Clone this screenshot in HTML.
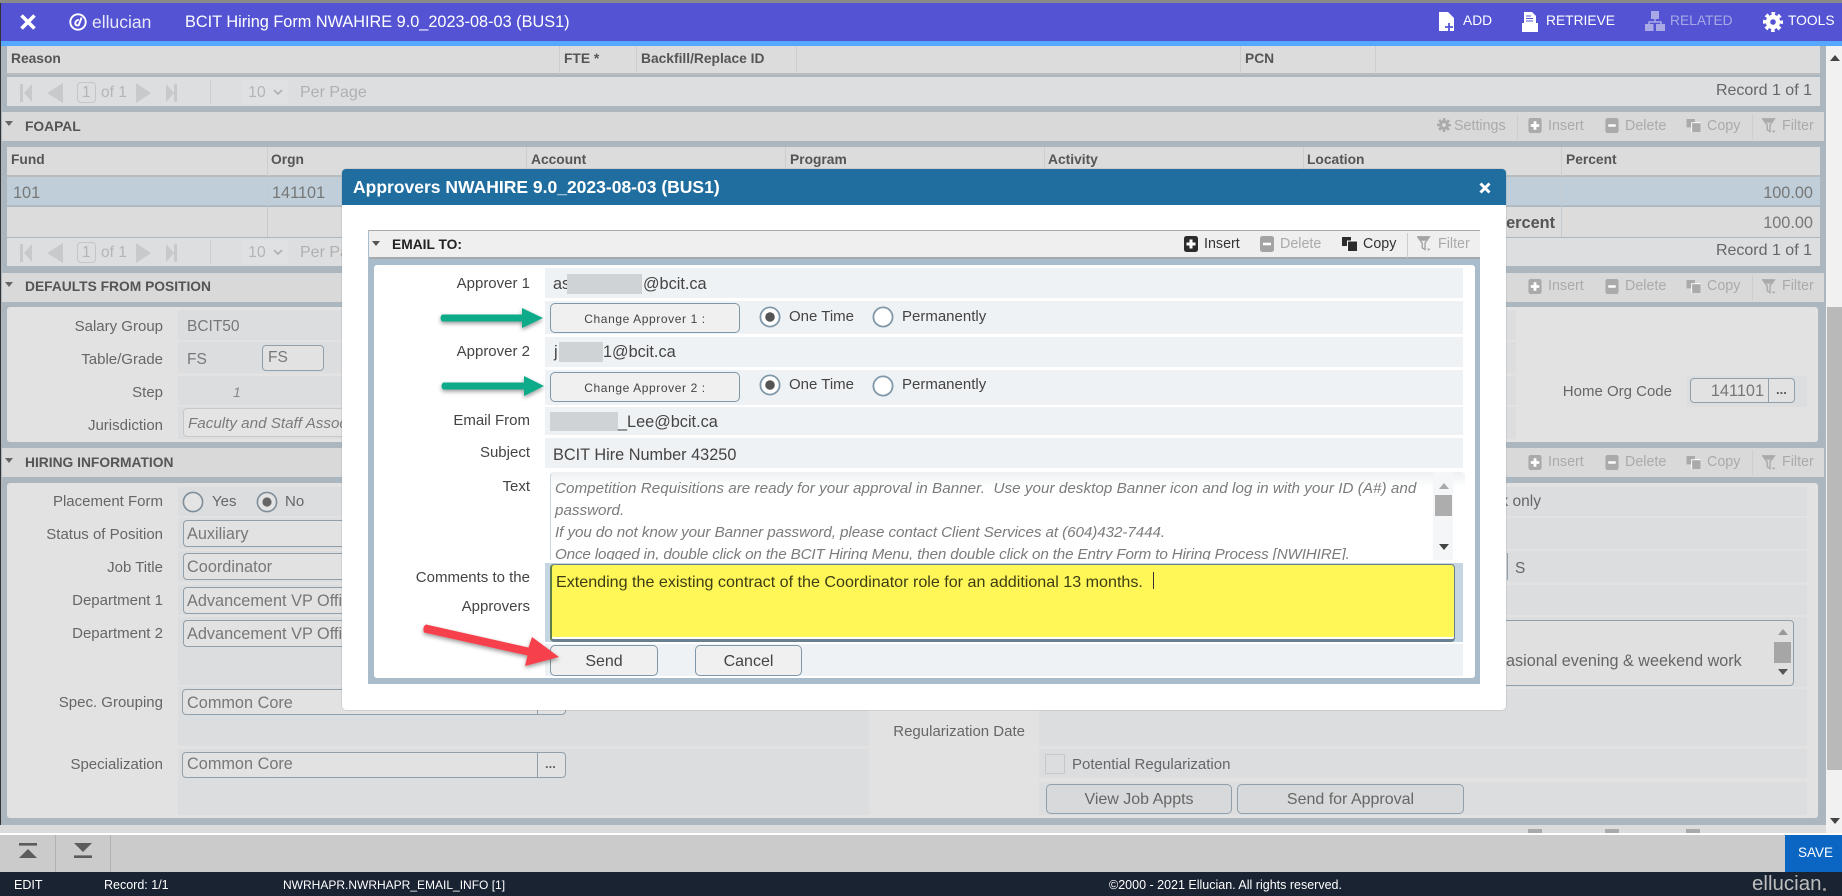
<!DOCTYPE html>
<html><head><meta charset="utf-8"><title>BCIT Hiring Form</title>
<style>
html,body{margin:0;padding:0}
body{width:1842px;height:896px;position:relative;overflow:hidden;background:#abb6bf;font-family:"Liberation Sans",sans-serif;color:#666}
.a{position:absolute}
.t{position:absolute;white-space:nowrap;transform:translateY(-50%);font-size:15px;line-height:20px;margin-top:1px}
.r{position:absolute;white-space:nowrap;transform:translate(-100%,-50%);font-size:15px;line-height:20px;margin-top:1px}
.b{font-weight:bold;font-size:13.8px;color:#555}
.h{background:#d9d9d9}
.c{background:#dcdcdc;border-bottom:2px solid #b8bcbf;box-sizing:border-box}
.p{background:#dddee0}
.v{position:absolute;background:#dcdddf}
.i{position:absolute;background:#e2e2e2;border:1px solid #8f9fab;border-radius:4px;box-sizing:border-box}
.tb{color:#aaa;font-size:14.3px}
.d{position:absolute;width:1px;background:#cdcdcd}
svg{position:absolute;overflow:visible}
.m{color:#444}
.mv{position:absolute;background:#eff2f4;left:545px;width:918px}
.btn{position:absolute;background:#f0f0f0;border:1px solid #7f98a9;border-radius:5px;box-sizing:border-box;text-align:center;color:#444}
.gb{background:#d8d9da;border-color:#8f9fab;color:#666;font-size:16px;line-height:30px}
.mask{position:absolute;background:#cfd3d6}
.it{font-style:italic;color:#7b7b7b;font-size:15.2px}
.f{font-size:16.3px;color:#777}
.mf{font-size:16.3px}
.pt{color:#b5b5b5;font-size:15.5px}
.tw{font-size:13.8px}
</style></head><body>
<svg width="0" height="0" style="position:absolute">
<defs>
<symbol id="ins" viewBox="0 0 14 16"><rect width="14" height="16" rx="2.5" fill="currentColor"/><path d="M7 3.500v9M2.500 8h9" stroke="#fff" stroke-width="3"/></symbol>
<symbol id="del" viewBox="0 0 14 16"><rect width="14" height="16" rx="2.5" fill="currentColor"/><path d="M3 8h8" stroke="#fff" stroke-width="2.6"/></symbol>
<symbol id="cop" viewBox="0 0 15 14"><rect x="0" y="0" width="9" height="9" fill="currentColor"/><rect x="5" y="3.500" width="10" height="10.500" fill="#fff"/><rect x="6" y="4.500" width="9" height="9.500" fill="currentColor"/></symbol>
<symbol id="fil" viewBox="0 0 15 16"><path d="M.7.8h12.600L8.600 7.500V14.500L5.600 12.600V7.500Z" fill="none" stroke="currentColor" stroke-width="1.500"/><path d="M1.500 1.500h11L9 5H5Z" fill="currentColor"/><path d="M10.500 13.500h4l-2 2.400Z" fill="currentColor"/></symbol>
<symbol id="gear" viewBox="0 0 20 20"><circle cx="10" cy="10" r="5" fill="none" stroke="currentColor" stroke-width="4.4"/><circle cx="10" cy="10" r="8.300" fill="none" stroke="currentColor" stroke-width="3.400" stroke-dasharray="3.600 2.920" stroke-dashoffset="1.800"/></symbol>
<symbol id="pg" viewBox="0 0 160 20"><path d="M0 1h3v18H0ZM12 1v18L4 10ZM43 0v20L27 10Z" fill="currentColor"/><path d="M116 0v20l15-10ZM146 1v18l8-9ZM154 1h3v18h-3Z" fill="currentColor"/></symbol>
</defs>
</svg>

<!-- top -->
<div class="a" style="left:0;top:0;width:1842px;height:3px;background:#8a8a8a"></div>
<div class="a" style="left:0;top:3px;width:1842px;height:38px;background:#5353d3"></div>
<div class="a" style="left:0;top:41px;width:1842px;height:5px;background:#56a8ff"></div>
<div class="a" style="left:0;top:3px;width:1px;height:869px;background:#333"></div>
<svg style="left:20px;top:14px" width="16" height="16"><path d="M1.500 1.500 14.500 14.500M14.500 1.500 1.500 14.500" stroke="#fff" stroke-width="3.600"/></svg>
<svg style="left:69px;top:13px" width="18" height="18" viewBox="0 0 18 18"><circle cx="9" cy="9" r="7.700" fill="none" stroke="#fff" stroke-width="1.900"/><path d="M12.600 4.500 10 11.500C9.400 13 6.600 12.800 6.300 10.600 6.100 8.600 7.800 6.800 9.800 7" fill="none" stroke="#fff" stroke-width="1.900"/></svg>
<div class="t" style="left:92px;top:21px;font-size:17.5px;color:#e8e8f8">ellucian</div>
<div class="t" style="left:185px;top:21px;font-size:16.3px;color:#fff">BCIT Hiring Form NWAHIRE 9.0_2023-08-03 (BUS1)</div>

<svg style="left:1439px;top:12px" width="15" height="19" viewBox="0 0 15 19"><path d="M0 0h9l6 6v13H0Z" fill="#fff"/><path d="M10 11v8M6 15h8" stroke="#5353d3" stroke-width="1.800"/></svg>
<div class="t tw" style="left:1463px;top:20px;color:#fff">ADD</div>
<svg style="left:1522px;top:12px" width="16" height="20" viewBox="0 0 16 20"><path d="M2 0h8l4 4v7H2Z" fill="#fff"/><path d="M4 4h5M4 6.500h7M4 9h7" stroke="#5353d3" stroke-width="1"/><path d="M0 11h16v9H0Z" fill="#fff"/></svg>
<div class="t tw" style="left:1546px;top:20px;color:#fff">RETRIEVE</div>
<svg style="left:1645px;top:11px" width="20" height="20" viewBox="0 0 20 20"><rect x="6" y="0" width="8" height="8" fill="#a9a9e6"/><path d="M10 8v3M4 14v-3h12v3" stroke="#a9a9e6" stroke-width="1.500" fill="none"/><rect x="0" y="13" width="8.500" height="7" fill="#a9a9e6"/><rect x="11" y="13" width="9" height="7" fill="#a9a9e6"/></svg>
<div class="t tw" style="left:1670px;top:20px;color:#a9a9e6">RELATED</div>
<svg style="left:1763px;top:12px;color:#fff" width="20" height="20"><use href="#gear"/></svg>
<div class="t tw" style="left:1788px;top:20px;color:#fff">TOOLS</div>

<!-- scrollbar -->
<div class="a" style="left:1826px;top:46px;width:16px;height:787px;background:#f1f1f1"></div>
<div class="a" style="left:1827px;top:307px;width:15px;height:463px;background:#b9b9b9"></div>
<svg style="left:1830px;top:55px" width="10" height="6"><path d="M0 6h10L5 0Z" fill="#444"/></svg>
<svg style="left:1830px;top:818px" width="10" height="6"><path d="M0 0h10L5 6Z" fill="#444"/></svg>
<div class="a" style="left:1824px;top:46px;width:2px;height:787px;background:#abb6bf"></div>

<!-- reason table -->
<div class="a c" style="left:7px;top:46px;width:1813px;height:29px"></div>
<div class="d" style="left:559px;top:46px;height:28px"></div><div class="d" style="left:636px;top:46px;height:28px"></div><div class="d" style="left:796px;top:46px;height:28px"></div><div class="d" style="left:1240px;top:46px;height:28px"></div><div class="d" style="left:1375px;top:46px;height:28px"></div>
<div class="t b" style="left:11px;top:58px">Reason</div><div class="t b" style="left:564px;top:58px">FTE *</div><div class="t b" style="left:641px;top:58px">Backfill/Replace ID</div><div class="t b" style="left:1245px;top:58px">PCN</div>
<div class="a p" style="left:7px;top:77px;width:1813px;height:29px"></div>
<svg style="left:20px;top:83px;color:#c7c9cb" width="160" height="20"><use href="#pg"/></svg>
<div class="a" style="left:77px;top:82px;width:19px;height:21px;border:1px solid #c5c5c5;border-radius:4px;box-sizing:border-box"></div>
<div class="t pt" style="left:82px;top:92px">1</div><div class="t pt" style="left:101px;top:92px">of 1</div>
<div class="d" style="left:210px;top:80px;height:24px"></div>
<div class="a" style="left:242px;top:80px;width:46px;height:24px;background:#e0e1e2"></div>
<div class="t" style="left:248px;top:92px;color:#b5b5b5;font-size:16px">10</div>
<svg style="left:273px;top:89px" width="10" height="7"><path d="M1 1l4 4 4-4" fill="none" stroke="#aaa" stroke-width="1.500"/></svg>
<div class="t" style="left:300px;top:92px;color:#b0b0b0;font-size:16px">Per Page</div>
<div class="r" style="left:1812px;top:90px;color:#666;font-size:16px">Record 1 of 1</div>

<!-- FOAPAL -->
<div class="a h" style="left:2px;top:112px;width:1822px;height:29px"></div>
<svg style="left:5px;top:121px" width="8" height="5"><path d="M0 0h8L4 5Z" fill="#666"/></svg>
<div class="t b" style="left:25px;top:126px">FOAPAL</div>
<svg style="left:1437px;top:118px;color:#aaa" width="14" height="14"><use href="#gear"/></svg>
<div class="t tb" style="left:1454px;top:125px">Settings</div><div class="d" style="left:1517px;top:114px;height:25px"></div>
<svg style="left:1528px;top:118px;color:#aaa" width="14" height="15"><use href="#ins"/></svg><div class="t tb" style="left:1548px;top:125px">Insert</div>
<svg style="left:1605px;top:118px;color:#aaa" width="14" height="15"><use href="#del"/></svg><div class="t tb" style="left:1625px;top:125px">Delete</div>
<svg style="left:1686px;top:119px;color:#aaa" width="15" height="13"><use href="#cop"/></svg><div class="t tb" style="left:1707px;top:125px">Copy</div><div class="d" style="left:1752px;top:114px;height:25px"></div>
<svg style="left:1762px;top:118px;color:#aaa" width="14" height="15"><use href="#fil"/></svg><div class="t tb" style="left:1782px;top:125px">Filter</div>

<div class="a c" style="left:7px;top:147px;width:1813px;height:30px"></div>
<div class="a" style="left:7px;top:177px;width:1813px;height:29px;background:#bfced8;border-bottom:1px solid #b0bdc6;box-sizing:border-box"></div>
<div class="a" style="left:7px;top:207px;width:1813px;height:30px;background:#dcdcdc"></div>
<div class="d" style="left:267px;top:147px;height:29px"></div><div class="d" style="left:526px;top:147px;height:29px"></div><div class="d" style="left:785px;top:147px;height:29px"></div><div class="d" style="left:1044px;top:147px;height:29px"></div><div class="d" style="left:1303px;top:147px;height:29px"></div><div class="d" style="left:1561px;top:147px;height:29px"></div><div class="d" style="left:267px;top:177px;height:60px;background:#c4cbd0"></div><div class="d" style="left:1561px;top:177px;height:60px;background:#c4cbd0"></div>
<div class="t b" style="left:11px;top:159px">Fund</div><div class="t b" style="left:271px;top:159px">Orgn</div><div class="t b" style="left:531px;top:159px">Account</div><div class="t b" style="left:790px;top:159px">Program</div><div class="t b" style="left:1048px;top:159px">Activity</div><div class="t b" style="left:1307px;top:159px">Location</div><div class="t b" style="left:1566px;top:159px">Percent</div>
<div class="t f" style="left:13px;top:192px">101</div><div class="t f" style="left:272px;top:192px">141101</div>
<div class="r f" style="left:1813px;top:192px">100.00</div>
<div class="r f" style="left:1813px;top:222px">100.00</div>
<div class="r" style="left:1555px;top:222px;font-size:16.3px;font-weight:bold;color:#555">Total Percent</div>
<div class="a p" style="left:7px;top:238px;width:1813px;height:28px"></div>
<svg style="left:20px;top:243px;color:#c7c9cb" width="160" height="20"><use href="#pg"/></svg>
<div class="a" style="left:77px;top:242px;width:19px;height:21px;border:1px solid #c5c5c5;border-radius:4px;box-sizing:border-box"></div>
<div class="t pt" style="left:82px;top:252px">1</div><div class="t pt" style="left:101px;top:252px">of 1</div>
<div class="d" style="left:210px;top:240px;height:24px"></div>
<div class="a" style="left:242px;top:240px;width:46px;height:24px;background:#e0e1e2"></div>
<div class="t" style="left:248px;top:252px;color:#b5b5b5;font-size:16px">10</div>
<svg style="left:273px;top:249px" width="10" height="7"><path d="M1 1l4 4 4-4" fill="none" stroke="#aaa" stroke-width="1.500"/></svg>
<div class="t" style="left:300px;top:252px;color:#b0b0b0;font-size:16px">Per Page</div>
<div class="r" style="left:1812px;top:250px;color:#666;font-size:16px">Record 1 of 1</div>

<!-- DEFAULTS -->
<div class="a h" style="left:2px;top:273px;width:1822px;height:29px"></div>
<svg style="left:5px;top:282px" width="8" height="5"><path d="M0 0h8L4 5Z" fill="#666"/></svg>
<div class="t b" style="left:25px;top:286px">DEFAULTS FROM POSITION</div>
<svg style="left:1528px;top:279px;color:#aaa" width="14" height="15"><use href="#ins"/></svg><div class="t tb" style="left:1548px;top:285px">Insert</div>
<svg style="left:1605px;top:279px;color:#aaa" width="14" height="15"><use href="#del"/></svg><div class="t tb" style="left:1625px;top:285px">Delete</div>
<svg style="left:1686px;top:280px;color:#aaa" width="15" height="13"><use href="#cop"/></svg><div class="t tb" style="left:1707px;top:285px">Copy</div><div class="d" style="left:1752px;top:275px;height:25px"></div>
<svg style="left:1762px;top:279px;color:#aaa" width="14" height="15"><use href="#fil"/></svg><div class="t tb" style="left:1782px;top:285px">Filter</div>
<div class="a" style="left:7px;top:307px;width:1811px;height:135px;background:#e2e2e2;border-radius:3px"></div>
<div class="v" style="left:178px;top:310px;width:1338px;height:30px"></div>
<div class="v" style="left:178px;top:342px;width:1338px;height:31px"></div>
<div class="v" style="left:178px;top:376px;width:1338px;height:29px"></div>
<div class="v" style="left:178px;top:407px;width:1338px;height:32px"></div>
<div class="r" style="left:163px;top:326px">Salary Group</div><div class="t" style="left:187px;top:326px;font-size:15.5px;color:#777">BCIT50</div>
<div class="r" style="left:163px;top:359px">Table/Grade</div><div class="t" style="left:187px;top:359px;font-size:15.5px;color:#777">FS</div>
<div class="i" style="left:262px;top:345px;width:62px;height:26px"></div><div class="t" style="left:268px;top:357px;font-size:15.5px;color:#777">FS</div>
<div class="r" style="left:163px;top:392px">Step</div><div class="t" style="left:233px;top:391px;font-style:italic;font-size:14px;color:#888">1</div>
<div class="r" style="left:163px;top:425px">Jurisdiction</div><div class="i" style="left:183px;top:408px;width:400px;height:29px;border-color:#c8c8c8;background:#e4e4e4"></div><div class="t it" style="left:188px;top:423px">Faculty and Staff Association</div>
<div class="v" style="left:1687px;top:376px;width:120px;height:31px"></div>
<div class="r" style="left:1672px;top:391px">Home Org Code</div>
<div class="i" style="left:1690px;top:378px;width:105px;height:25px"></div><div class="d" style="left:1768px;top:379px;height:23px;background:#8f9fab"></div>
<div class="r f" style="left:1764px;top:390px">141101</div><div class="t" style="left:1776px;top:389px;font-weight:bold;font-size:13px;color:#555">...</div>

<!-- HIRING -->
<div class="a h" style="left:2px;top:448px;width:1822px;height:29px"></div>
<svg style="left:5px;top:458px" width="8" height="5"><path d="M0 0h8L4 5Z" fill="#666"/></svg>
<div class="t b" style="left:25px;top:462px">HIRING INFORMATION</div>
<svg style="left:1528px;top:455px;color:#aaa" width="14" height="15"><use href="#ins"/></svg><div class="t tb" style="left:1548px;top:461px">Insert</div>
<svg style="left:1605px;top:455px;color:#aaa" width="14" height="15"><use href="#del"/></svg><div class="t tb" style="left:1625px;top:461px">Delete</div>
<svg style="left:1686px;top:456px;color:#aaa" width="15" height="13"><use href="#cop"/></svg><div class="t tb" style="left:1707px;top:461px">Copy</div><div class="d" style="left:1752px;top:450px;height:25px"></div>
<svg style="left:1762px;top:455px;color:#aaa" width="14" height="15"><use href="#fil"/></svg><div class="t tb" style="left:1782px;top:461px">Filter</div>
<div class="a" style="left:7px;top:483px;width:1811px;height:335px;background:#e2e2e2;border-radius:3px"></div>
<div class="v" style="left:178px;top:487px;width:1629px;height:29px"></div>
<div class="v" style="left:178px;top:518px;width:1629px;height:31px"></div>
<div class="v" style="left:178px;top:551px;width:1629px;height:31px"></div>
<div class="v" style="left:178px;top:585px;width:1629px;height:30px"></div>
<div class="v" style="left:178px;top:617px;width:691px;height:68px"></div>
<div class="v" style="left:178px;top:687px;width:691px;height:59px"></div>
<div class="v" style="left:178px;top:749px;width:691px;height:66px"></div>
<div class="v" style="left:1039px;top:617px;width:768px;height:70px"></div>
<div class="v" style="left:1039px;top:689px;width:768px;height:57px"></div>
<div class="v" style="left:1039px;top:749px;width:768px;height:29px"></div>
<div class="v" style="left:1039px;top:782px;width:768px;height:33px"></div>

<div class="r" style="left:163px;top:501px">Placement Form</div>
<svg style="left:182px;top:491px" width="22" height="22"><circle cx="11" cy="11" r="9.600" fill="#e4e4e4" stroke="#7e8d98" stroke-width="1.600"/></svg><div class="t" style="left:212px;top:501px;color:#666">Yes</div>
<svg style="left:256px;top:491px" width="22" height="22"><circle cx="11" cy="11" r="9.600" fill="#e4e4e4" stroke="#7e8d98" stroke-width="1.600"/><circle cx="11" cy="11" r="4.600" fill="#666"/></svg><div class="t" style="left:285px;top:501px;color:#666">No</div>
<div class="r" style="left:163px;top:534px">Status of Position</div><div class="i" style="left:183px;top:520px;width:380px;height:27px"></div><div class="t f" style="left:187px;top:533px">Auxiliary</div>
<div class="r" style="left:163px;top:567px">Job Title</div><div class="i" style="left:183px;top:553px;width:380px;height:27px"></div><div class="t f" style="left:187px;top:566px">Coordinator</div>
<div class="r" style="left:163px;top:600px">Department 1</div><div class="i" style="left:183px;top:587px;width:380px;height:27px"></div><div class="t f" style="left:187px;top:600px">Advancement VP Office</div>
<div class="r" style="left:163px;top:633px">Department 2</div><div class="i" style="left:183px;top:620px;width:380px;height:27px"></div><div class="t f" style="left:187px;top:633px">Advancement VP Office</div>
<div class="r" style="left:163px;top:702px">Spec. Grouping</div><div class="i" style="left:182px;top:689px;width:384px;height:26px"></div><div class="t f" style="left:187px;top:702px">Common Core</div><div class="d" style="left:537px;top:690px;height:24px;background:#8f9fab"></div>
<div class="r" style="left:163px;top:764px">Specialization</div><div class="i" style="left:182px;top:752px;width:384px;height:26px"></div><div class="t f" style="left:187px;top:763px">Common Core</div><div class="d" style="left:537px;top:753px;height:24px;background:#8f9fab"></div><div class="t" style="left:545px;top:763px;font-weight:bold;font-size:13px;color:#666">...</div>
<div class="r" style="left:1541px;top:501px;color:#666;font-size:15.5px">k only</div>
<div class="d" style="left:1507px;top:553px;height:27px;background:#8f9fab"></div><div class="t" style="left:1515px;top:568px;color:#666;font-size:15.5px">S</div>
<div class="i" style="left:1300px;top:620px;width:494px;height:66px;background:#e0e0e0"></div>
<div class="t" style="left:1506px;top:660px;font-size:16.2px;color:#666">asional evening &amp; weekend work</div>
<div class="a" style="left:1774px;top:642px;width:17px;height:21px;background:#a6a6a6"></div>
<svg style="left:1778px;top:629px" width="10" height="6"><path d="M0 6h10L5 0Z" fill="#999"/></svg>
<svg style="left:1778px;top:669px" width="10" height="6"><path d="M0 0h10L5 6Z" fill="#555"/></svg>
<div class="r" style="left:1025px;top:731px">Regularization Date</div>
<div class="a" style="left:1045px;top:754px;width:20px;height:20px;border:1px solid #c8c8c8;box-sizing:border-box"></div>
<div class="t" style="left:1072px;top:764px;font-size:15px;color:#666">Potential Regularization</div>
<div class="btn gb" style="left:1046px;top:784px;width:186px;height:30px">View Job Appts</div>
<div class="btn gb" style="left:1237px;top:784px;width:227px;height:30px">Send for Approval</div>

<!-- bottom -->
<div class="a" style="left:0;top:825px;width:1826px;height:8px;background:#dcdcdc"></div>
<div class="a" style="left:1528px;top:829px;width:14px;height:4px;background:#aaa"></div><div class="a" style="left:1605px;top:829px;width:14px;height:4px;background:#aaa"></div><div class="a" style="left:1686px;top:829px;width:14px;height:4px;background:#aaa"></div>
<div class="a" style="left:0;top:833px;width:1842px;height:2px;background:#fff"></div>
<div class="a" style="left:0;top:835px;width:1842px;height:37px;background:#cbcbcb"></div>
<div class="d" style="left:55px;top:835px;height:37px;background:#b2b2b2"></div><div class="d" style="left:110px;top:835px;height:37px;background:#b2b2b2"></div>
<svg style="left:19px;top:843px" width="18" height="15"><path d="M0 0h18v2.600H0Z" fill="#5c5c5c"/><path d="M0 15h18L9 6Z" fill="#5c5c5c"/></svg>
<svg style="left:74px;top:843px" width="18" height="15"><path d="M0 0h18L9 9Z" fill="#5c5c5c"/><path d="M0 12.400h18V15H0Z" fill="#5c5c5c"/></svg>
<div class="a" style="left:1785px;top:835px;width:57px;height:37px;background:#0a66c2"></div>
<div class="t" style="left:1798px;top:852px;color:#fff;font-size:13.5px">SAVE</div>
<div class="a" style="left:0;top:872px;width:1842px;height:24px;background:#1a2332"></div>
<div class="t" style="left:14px;top:884px;color:#fff;font-size:12.5px">EDIT</div>
<div class="t" style="left:104px;top:884px;color:#fff;font-size:12.5px">Record: 1/1</div>
<div class="t" style="left:283px;top:884px;color:#fff;font-size:12px">NWRHAPR.NWRHAPR_EMAIL_INFO [1]</div>
<div class="t" style="left:1109px;top:884px;color:#fff;font-size:12.5px">©2000 - 2021 Ellucian. All rights reserved.</div>
<div class="t" style="left:1752px;top:883px;color:#bdbdbd;font-size:20.5px">ellucian</div>
<div class="a" style="left:1823px;top:888px;width:3px;height:3px;background:#9a9a9a;border-radius:50%"></div>

<!-- modal -->
<div class="a" style="left:342px;top:169px;width:1164px;height:541px;background:#fff;border-radius:4px;box-shadow:0 0 1px #777"></div>
<div class="a" style="left:342px;top:169px;width:1164px;height:36px;background:#206ea0;border-radius:4px 4px 0 0"></div>
<div class="t" style="left:353px;top:186px;color:#fff;font-weight:bold;font-size:17.5px">Approvers NWAHIRE 9.0_2023-08-03 (BUS1)</div>
<svg style="left:1479px;top:182px" width="12" height="12"><path d="M1.500 1.500 10.500 10.500M10.500 1.500 1.500 10.500" stroke="#fff" stroke-width="3"/></svg>

<div class="a" style="left:368px;top:230px;width:1112px;height:454px;background:#a9bccb"></div>
<div class="a" style="left:369px;top:230px;width:1111px;height:29px;background:#efefef;border-top:1px solid #aaa;border-bottom:2px solid #a5a9ac;box-sizing:border-box"></div>
<svg style="left:372px;top:241px" width="8" height="5"><path d="M0 0h8L4 5Z" fill="#555"/></svg>
<div class="t" style="left:392px;top:244px;font-weight:bold;font-size:13.8px;color:#222">EMAIL TO:</div>
<svg style="left:1184px;top:236px;color:#2c2c2c" width="14" height="16"><use href="#ins"/></svg><div class="t" style="left:1204px;top:243px;font-size:14.3px;color:#333">Insert</div>
<svg style="left:1260px;top:236px;color:#a3a3a3" width="14" height="16"><use href="#del"/></svg><div class="t tb" style="left:1280px;top:243px">Delete</div>
<svg style="left:1342px;top:237px;color:#2c2c2c" width="15" height="14"><use href="#cop"/></svg><div class="t" style="left:1363px;top:243px;font-size:14.3px;color:#333">Copy</div><div class="d" style="left:1407px;top:233px;height:25px"></div>
<svg style="left:1417px;top:236px;color:#a3a3a3" width="14" height="15"><use href="#fil"/></svg><div class="t tb" style="left:1438px;top:243px">Filter</div>
<div class="a" style="left:374px;top:265px;width:1101px;height:413px;background:#fff;border-radius:3px"></div>

<div class="mv" style="top:268px;height:30px"></div>
<div class="mv" style="top:301px;height:33px"></div>
<div class="mv" style="top:337px;height:30px"></div>
<div class="mv" style="top:370px;height:35px"></div>
<div class="mv" style="top:407px;height:28px"></div>
<div class="mv" style="top:438px;height:30px"></div>
<div class="mv" style="top:644px;height:32px"></div>
<div class="r m" style="left:530px;top:283px">Approver 1</div>
<div class="t m mf" style="left:553px;top:283px">as</div><div class="mask" style="left:567px;top:274px;width:75px;height:20px"></div><div class="t m mf" style="left:643px;top:283px">@bcit.ca</div>
<div class="btn" style="left:550px;top:303px;width:190px;height:30px;font-size:12px;line-height:30px;letter-spacing:.6px">Change Approver 1 :</div>
<svg style="left:759px;top:306px" width="22" height="22"><circle cx="11" cy="11" r="9.600" fill="#fff" stroke="#7f98a9" stroke-width="1.800"/><circle cx="11" cy="11" r="4.800" fill="#555"/></svg><div class="t m" style="left:789px;top:316px;font-size:15px">One Time</div>
<svg style="left:872px;top:306px" width="22" height="22"><circle cx="11" cy="11" r="9.600" fill="#fff" stroke="#7f98a9" stroke-width="1.800"/></svg><div class="t m" style="left:902px;top:316px">Permanently</div>
<div class="r m" style="left:530px;top:351px">Approver 2</div>
<div class="t m mf" style="left:554px;top:351px">j</div><div class="mask" style="left:559px;top:342px;width:44px;height:20px"></div><div class="t m mf" style="left:603px;top:351px">1@bcit.ca</div>
<div class="btn" style="left:550px;top:372px;width:190px;height:30px;font-size:12px;line-height:30px;letter-spacing:.6px">Change Approver 2 :</div>
<svg style="left:759px;top:374px" width="22" height="22"><circle cx="11" cy="11" r="9.600" fill="#fff" stroke="#7f98a9" stroke-width="1.800"/><circle cx="11" cy="11" r="4.800" fill="#555"/></svg><div class="t m" style="left:789px;top:384px;font-size:15px">One Time</div>
<svg style="left:872px;top:375px" width="22" height="22"><circle cx="11" cy="11" r="9.600" fill="#fff" stroke="#7f98a9" stroke-width="1.800"/></svg><div class="t m" style="left:902px;top:384px">Permanently</div>
<div class="r m" style="left:530px;top:420px">Email From</div>
<div class="mask" style="left:550px;top:412px;width:68px;height:19px"></div><div class="t m mf" style="left:618px;top:421px">_Lee@bcit.ca</div>
<div class="r m" style="left:530px;top:452px">Subject</div><div class="t m mf" style="left:553px;top:454px">BCIT Hire Number 43250</div>
<div class="r m" style="left:530px;top:486px">Text</div>
<div class="r m" style="left:530px;top:577px">Comments to the</div>
<div class="r m" style="left:530px;top:606px">Approvers</div>

<div class="a" style="left:550px;top:472px;width:914px;height:88px;background:linear-gradient(#edf0f2,#fff 18%);overflow:hidden;border-left:1px solid #ccd5db;border-radius:4px 4px 0 0">
<div class="t it" style="left:4px;top:16px;letter-spacing:.04px">Competition Requisitions are ready for your approval in Banner.&nbsp; Use your desktop Banner icon and log in with your ID (A#) and</div>
<div class="t it" style="left:4px;top:38px">password.</div>
<div class="t it" style="left:4px;top:60px;letter-spacing:-.07px">If you do not know your Banner password, please contact Client Services at (604)432-7444.</div>
<div class="t it" style="left:4px;top:82px;letter-spacing:-.14px">Once logged in, double click on the BCIT Hiring Menu, then double click on the Entry Form to Hiring Process [NWIHIRE].</div>
</div>
<div class="a" style="left:1433px;top:472px;width:20px;height:88px;background:#f4f6f7"></div>
<div class="a" style="left:1435px;top:495px;width:17px;height:21px;background:#adadad"></div>
<svg style="left:1439px;top:483px" width="10" height="6"><path d="M0 6h10L5 0Z" fill="#aaa"/></svg>
<svg style="left:1439px;top:544px" width="10" height="6"><path d="M0 0h10L5 6Z" fill="#444"/></svg>

<div class="a" style="left:545px;top:563px;width:918px;height:79px;background:#c5d6e2"></div>
<div class="a" style="left:550px;top:564px;width:905px;height:78px;background:#fff657;border:1px solid #68808f;border-left:2px solid #5f7f4a;border-bottom:3px solid #68808f;border-radius:4px;box-sizing:border-box;box-shadow:inset 0 -2px 0 #fff"></div>
<div class="t" style="left:556px;top:581px;font-size:16.1px;color:#3d3d14">Extending the existing contract of the Coordinator role for an additional 13 months.</div>
<div class="a" style="left:1153px;top:572px;width:1px;height:17px;background:#333"></div>

<div class="btn" style="left:550px;top:645px;width:108px;height:31px;font-size:16px;line-height:31px">Send</div>
<div class="btn" style="left:695px;top:645px;width:107px;height:31px;font-size:16px;line-height:31px">Cancel</div>

<!-- annotation arrows -->
<svg style="left:0;top:0" width="1842" height="896">
<defs><filter id="s" x="-10%" y="-50%" width="120%" height="200%"><feDropShadow dx="0" dy="2" stdDeviation="2" flood-color="#000" flood-opacity=".4"/></filter></defs>
<path d="M442 314.500H522V308L543 318 522 328V321.500H442Q439 318 442 314.500Z" fill="#0aab8a" filter="url(#s)"/>
<path d="M443 382.500H524V376L544 386 524 396V389.500H443Q440 386 443 382.500Z" fill="#0aab8a" filter="url(#s)"/>
<path d="M426 624.500 L528.500 647.500 L532 637 L559 657 L525 666 L527.500 655.500 L424 632.500 Q422 627 426 624.500Z" fill="#f6404b" filter="url(#s)"/>
</svg>
</body></html>
